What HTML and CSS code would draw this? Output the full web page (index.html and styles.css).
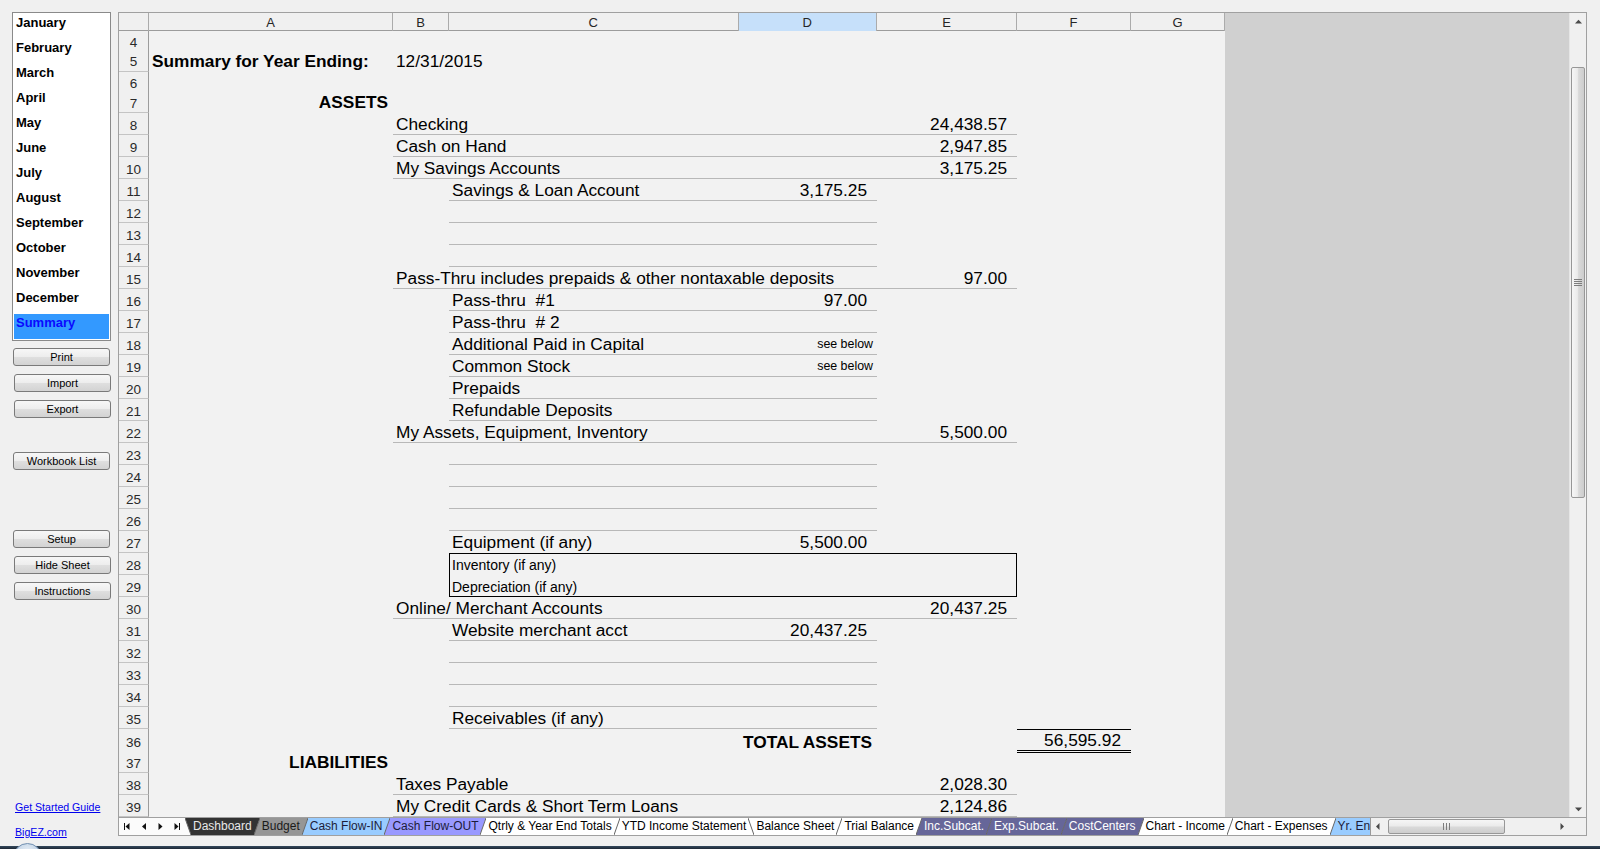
FILE: index.html
```html
<!DOCTYPE html>
<html>
<head>
<meta charset="utf-8">
<title>Balance Sheet</title>
<link rel="stylesheet" href="styles.css">
</head>
<body>
<div class="app">
  <aside class="side">
    <ul class="months">
      <li>January</li><li>February</li><li>March</li><li>April</li><li>May</li><li>June</li><li>July</li><li>August</li><li>September</li><li>October</li><li>November</li><li>December</li><li class="sel">Summary</li>
    </ul>
    <button class="btn g7">Print</button>
    <button class="btn g8 sh">Import</button>
    <button class="btn g8 sh">Export</button>
    <button class="btn g34">Workbook List</button>
    <button class="btn g60">Setup</button>
    <button class="btn g8 sh">Hide Sheet</button>
    <button class="btn g8 sh">Instructions</button>
    <a class="link l1" href="#">Get Started Guide</a>
    <a class="link l2" href="#">BigEZ.com</a>
  </aside>

  <section class="book">
    <div class="main">
      <div class="sheet">
        <div class="ch"><span></span><span>A</span><span>B</span><span>C</span><span class="hsel">D</span><span>E</span><span>F</span><span>G</span></div>
        <div class="r r4"><b class="rh">4</b></div>
        <div class="r r5"><b class="rh">5</b><span class="t cA bd">Summary for Year Ending:</span><span class="t cB">12/31/2015</span></div>
        <div class="r r6"><b class="rh">6</b></div>
        <div class="r"><b class="rh">7</b><span class="t cA bd ra">ASSETS</span></div>
        <div class="r"><b class="rh">8</b><i class="u uBE"></i><span class="t cB">Checking</span><span class="n cE">24,438.57</span></div>
        <div class="r"><b class="rh">9</b><i class="u uBE"></i><span class="t cB">Cash on Hand</span><span class="n cE">2,947.85</span></div>
        <div class="r"><b class="rh">10</b><i class="u uBE"></i><span class="t cB">My Savings Accounts</span><span class="n cE">3,175.25</span></div>
        <div class="r"><b class="rh">11</b><i class="u uCD"></i><span class="t cC">Savings &amp; Loan Account</span><span class="n cD">3,175.25</span></div>
        <div class="r"><b class="rh">12</b><i class="u uCD"></i></div>
        <div class="r"><b class="rh">13</b><i class="u uCD"></i></div>
        <div class="r"><b class="rh">14</b><i class="u uCD"></i></div>
        <div class="r"><b class="rh">15</b><i class="u uBE"></i><span class="t cB">Pass-Thru includes prepaids &amp; other nontaxable deposits</span><span class="n cE">97.00</span></div>
        <div class="r"><b class="rh">16</b><i class="u uCD"></i><span class="t cC">Pass-thru  #1</span><span class="n cD">97.00</span></div>
        <div class="r"><b class="rh">17</b><i class="u uCD"></i><span class="t cC">Pass-thru  # 2</span></div>
        <div class="r"><b class="rh">18</b><i class="u uCD"></i><span class="t cC">Additional Paid in Capital</span><span class="sb cD">see below</span></div>
        <div class="r"><b class="rh">19</b><i class="u uCD"></i><span class="t cC">Common Stock</span><span class="sb cD">see below</span></div>
        <div class="r"><b class="rh">20</b><i class="u uCD"></i><span class="t cC">Prepaids</span></div>
        <div class="r"><b class="rh">21</b><i class="u uCD"></i><span class="t cC">Refundable Deposits</span></div>
        <div class="r"><b class="rh">22</b><i class="u uBE"></i><span class="t cB">My Assets, Equipment, Inventory</span><span class="n cE">5,500.00</span></div>
        <div class="r"><b class="rh">23</b><i class="u uCD"></i></div>
        <div class="r"><b class="rh">24</b><i class="u uCD"></i></div>
        <div class="r"><b class="rh">25</b><i class="u uCD"></i></div>
        <div class="r"><b class="rh">26</b><i class="u uCD"></i></div>
        <div class="r"><b class="rh">27</b><span class="t cC">Equipment (if any)</span><span class="n cD">5,500.00</span></div>
        <div class="r"><b class="rh">28</b><i class="bx bx1"></i><span class="t sm cC">Inventory (if any)</span></div>
        <div class="r"><b class="rh">29</b><i class="bx bx2"></i><span class="t sm cC">Depreciation (if any)</span></div>
        <div class="r"><b class="rh">30</b><i class="u uBE"></i><span class="t cB">Online/ Merchant Accounts</span><span class="n cE">20,437.25</span></div>
        <div class="r"><b class="rh">31</b><i class="u uCD"></i><span class="t cC">Website merchant acct</span><span class="n cD">20,437.25</span></div>
        <div class="r"><b class="rh">32</b><i class="u uCD"></i></div>
        <div class="r"><b class="rh">33</b><i class="u uCD"></i></div>
        <div class="r"><b class="rh">34</b><i class="u uCD"></i></div>
        <div class="r"><b class="rh">35</b><i class="u uCD"></i><span class="t cC">Receivables (if any)</span></div>
        <div class="r"><b class="rh">36</b><span class="t cD bd ra">TOTAL ASSETS</span><span class="tot cF">56,595.92</span></div>
        <div class="r"><b class="rh">37</b><span class="t cA bd ra">LIABILITIES</span></div>
        <div class="r"><b class="rh">38</b><i class="u uBE"></i><span class="t cB">Taxes Payable</span><span class="n cE">2,028.30</span></div>
        <div class="r"><b class="rh">39</b><i class="u uBE"></i><span class="t cB">My Credit Cards &amp; Short Term Loans</span><span class="n cE">2,124.86</span></div>
      </div>
      <div class="fill"></div>
      <div class="vs">
        <svg class="sbtn" width="16" height="17" viewBox="0 0 16 17"><path d="M5 10.5H12L8.5 6.8Z" fill="#4a4a4a"/></svg>
        <div class="vthumb">
          <svg width="8" height="7" viewBox="0 0 8 7"><path d="M0 0.5H8M0 2.5H8M0 4.5H8M0 6.5H8" stroke="#7d7d7d" stroke-width="1"/></svg>
        </div>
        <svg class="sbtn down" width="16" height="17" viewBox="0 0 16 17"><path d="M5 7.5H12L8.5 11.2Z" fill="#4a4a4a"/></svg>
      </div>
    </div>

    <div class="tabbar">
      <svg class="nav" width="66" height="17" viewBox="0 0 66 17">
        <g fill="#111">
          <rect x="5" y="5" width="1" height="7"/><path d="M6.5 8.5L10.5 5V12Z"/>
          <path d="M23 8.5L27 5V12Z"/>
          <path d="M43.5 8.5L39.5 5V12Z"/>
          <path d="M59.5 8.5L55.5 5V12Z"/><rect x="60" y="5" width="1" height="7"/>
        </g>
      </svg>
      <div class="tabs">
        <svg class="sep" viewBox="0 0 6 17"><path class="fs" d="M0 0L6 17H0Z"/><path class="fk" d="M0 0H6V17Z"/><path class="ln" d="M0 0L6 17"/></svg>
        <span class="tab tk">Dashboard</span>
        <svg class="sep" viewBox="0 0 6 17"><path class="fk" d="M0 0H6L0 17Z"/><path class="fg" d="M6 0V17H0Z"/><path class="ln" d="M0 17L6 0"/></svg>
        <span class="tab tg">Budget</span>
        <svg class="sep" viewBox="0 0 6 17"><path class="fg" d="M0 0H6L0 17Z"/><path class="fb" d="M6 0V17H0Z"/><path class="ln" d="M0 17L6 0"/></svg>
        <span class="tab tb">Cash Flow-IN</span>
        <svg class="sep" viewBox="0 0 6 17"><path class="fb" d="M0 0H6L0 17Z"/><path class="fp" d="M6 0V17H0Z"/><path class="ln" d="M0 17L6 0"/></svg>
        <span class="tab tp">Cash Flow-OUT</span>
        <svg class="sep" viewBox="0 0 6 17"><path class="fp" d="M0 0H6L0 17Z"/><path class="fw" d="M6 0V17H0Z"/><path class="ln" d="M0 17L6 0"/></svg>
        <span class="tab tw">Qtrly &amp; Year End Totals</span>
        <svg class="sep" viewBox="0 0 6 17"><path class="fw" d="M0 0H6L0 17Z"/><path class="fw" d="M6 0V17H0Z"/><path class="ln" d="M0 17L6 0"/></svg>
        <span class="tab tw">YTD Income Statement</span>
        <svg class="sep" viewBox="0 0 6 17"><path class="fw" d="M0 0L6 17H0Z"/><path class="fw" d="M0 0H6V17Z"/><path class="ln" d="M0 0L6 17"/></svg>
        <span class="tab tw">Balance Sheet</span>
        <svg class="sep" viewBox="0 0 6 17"><path class="fw" d="M0 0H6L0 17Z"/><path class="fw" d="M6 0V17H0Z"/><path class="ln" d="M0 17L6 0"/></svg>
        <span class="tab tw">Trial Balance</span>
        <svg class="sep" viewBox="0 0 6 17"><path class="fw" d="M0 0H6L0 17Z"/><path class="fs2" d="M6 0V17H0Z"/><path class="ln" d="M0 17L6 0"/></svg>
        <span class="tab ts">Inc.Subcat.</span>
        <svg class="sep" viewBox="0 0 6 17"><path class="fs2" d="M0 0H6L0 17Z"/><path class="fs2" d="M6 0V17H0Z"/><path class="ln" d="M0 17L6 0"/></svg>
        <span class="tab ts">Exp.Subcat.</span>
        <svg class="sep" viewBox="0 0 6 17"><path class="fs2" d="M0 0H6L0 17Z"/><path class="fs2" d="M6 0V17H0Z"/><path class="ln" d="M0 17L6 0"/></svg>
        <span class="tab ts">CostCenters</span>
        <svg class="sep" viewBox="0 0 6 17"><path class="fs2" d="M0 0H6L0 17Z"/><path class="fw" d="M6 0V17H0Z"/><path class="ln" d="M0 17L6 0"/></svg>
        <span class="tab tw">Chart - Income</span>
        <svg class="sep" viewBox="0 0 6 17"><path class="fw" d="M0 0H6L0 17Z"/><path class="fw" d="M6 0V17H0Z"/><path class="ln" d="M0 17L6 0"/></svg>
        <span class="tab tw">Chart - Expenses</span>
        <svg class="sep" viewBox="0 0 6 17"><path class="fw" d="M0 0H6L0 17Z"/><path class="fb" d="M6 0V17H0Z"/><path class="ln" d="M0 17L6 0"/></svg>
        <span class="tab tb">Yr. End Summary</span>
      </div>
      <div class="hs">
        <svg class="harr" width="14" height="17" viewBox="0 0 14 17"><path d="M5 8.5L8.5 5V12Z" fill="#4a4a4a"/></svg>
        <div class="hthumb">
          <svg width="7" height="7" viewBox="0 0 7 7"><path d="M0.5 0V7M3.5 0V7M6.5 0V7" stroke="#7d7d7d" stroke-width="1"/></svg>
        </div>
        <svg class="harr right" width="14" height="17" viewBox="0 0 14 17"><path d="M9 8.5L5.5 5V12Z" fill="#4a4a4a"/></svg>
      </div>
      <div class="corner"></div>
    </div>
  </section>
</div>
<div class="taskbar"></div>
<div class="orb"></div>
</body>
</html>
```

FILE: styles.css
```css
* { box-sizing: border-box; margin: 0; padding: 0; }
html, body { width: 1600px; height: 849px; overflow: hidden; }
body {
  background: #f0f0f0;
  font-family: "Liberation Sans", Arial, sans-serif;
  color: #000;
  position: relative;
}

.app { display: flex; height: 846px; padding-top: 12px; }

/* ---------- left panel ---------- */
.side {
  width: 118px; flex: none;
  display: flex; flex-direction: column; align-items: flex-start;
  padding-left: 12px;
}
.months {
  list-style: none;
  width: 99px; height: 329px;
  border: 1px solid #8a8a8a;
  background: #fff;
  padding: 1px;
}
.months li {
  height: 25px; line-height: 18px;
  padding: 0 0 7px 2px;
  font-size: 13px; font-weight: bold;
  white-space: nowrap;
}
.months li.sel { background: #3399ff; color: #0a0aff; }

.btn {
  display: block;
  width: 97px; height: 18px;
  margin-left: 1px;
  border: 1px solid #7a7a7a; border-radius: 3px;
  background: linear-gradient(#f7f7f7, #ededed 50%, #dfdfdf 51%, #d3d3d3);
  font: 11px "Liberation Sans", Arial, sans-serif;
  color: #000; text-align: center; line-height: 16px;
  padding: 0;
}
.btn.sh { margin-left: 2px; }
.g7 { margin-top: 7px; }
.g8 { margin-top: 8px; }
.g34 { margin-top: 34px; }
.g60 { margin-top: 60px; }

.link {
  font-size: 10.6px; line-height: 13px;
  color: #0000ee; text-decoration: underline;
  margin-left: 3px; white-space: nowrap;
}
.l1 { margin-top: 201px; }
.l2 { margin-top: 12px; }

/* ---------- workbook frame ---------- */
.book {
  width: 1469px; height: 824px; flex: none;
  border: 1px solid #a0a0a0;
  display: flex; flex-direction: column;
  background: #f0f0f0;
}
.main { display: flex; height: 804px; flex: none; }
.sheet { width: 1106px; flex: none; background: #f2f2f2; }
.fill { width: 344px; flex: none; background: #d0d0d0; }

/* column header */
.ch, .r {
  display: grid;
  grid-template-columns: 30px 244px 56px 289.5px 138.5px 140px 114px 94px;
}
.ch { height: 18px; border-bottom: 1px solid #9c9c9c; background: #f0f0f0; }
.ch span {
  border-right: 1px solid #ababab;
  text-align: center; font-size: 13px; line-height: 17px; color: #262626;
  padding-top: 1px;
}
.ch .hsel { background: #c6e0fa; }

/* rows */
.r { height: 22px; }
.r4 { height: 16px; }
.r5 { height: 25px; }
.r6 { height: 19px; }
.r > * { grid-row: 1; }

.rh {
  grid-column: 1;
  font-weight: normal; font-size: 13.5px; color: #2a2a2a;
  background: #f0f0f0;
  border-right: 1px solid #9c9c9c;
  border-bottom: 1px solid #c4c4c4;
  display: flex; align-items: center; justify-content: center;
  padding-top: 4px;
}

.cA { grid-column: 2; }
.cB { grid-column: 3; }
.cC { grid-column: 4; }
.cD { grid-column: 5; }
.cE { grid-column: 6; }
.cF { grid-column: 7; }

.t, .n, .sb {
  align-self: end;
  line-height: 20px; font-size: 17.3px;
  white-space: pre;
  padding-bottom: 1px;
}
.t { padding-left: 3px; }
.n { text-align: right; padding-right: 10px; }
.bd { font-weight: bold; }
.ra { text-align: right; padding-left: 0; padding-right: 5px; }
.sm { font-size: 14px; padding-bottom: 0; }
.sb { font-size: 12.4px; text-align: right; padding-right: 4px; padding-bottom: 1px; }

.u { align-self: end; height: 1px; background: #b8b8b8; }
.uBE { grid-column: 3 / 7; }
.uCD { grid-column: 4 / 6; }

.bx { grid-column: 4 / 7; align-self: stretch; border: 1px solid #000; }
.bx1 { border-bottom: 0; }
.bx2 { border-top: 0; }

.tot {
  align-self: stretch;
  border-top: 1px solid #000;
  border-bottom: 3px double #000;
  font-size: 17.3px; line-height: 20px;
  display: flex; align-items: flex-end; justify-content: flex-end;
  padding-right: 10px;
}

/* vertical scrollbar */
.vs {
  width: 17px; flex: none;
  border-left: 1px solid #e6e6e6;
  background: #f0f0f0;
  display: flex; flex-direction: column;
}
.sbtn { display: block; flex: none; }
.sbtn.down { margin-top: auto; }
.vthumb {
  margin: 37px 0 0 1px;
  width: 14px; height: 431px; flex: none;
  border: 1px solid #979797; border-radius: 2px;
  background: linear-gradient(to right, #f6f6f6, #ebebeb 45%, #d9d9d9 55%, #cdcdcd);
  display: flex; align-items: center; justify-content: center;
}

/* sheet tabs */
.tabbar {
  height: 18px; flex: none;
  border-top: 1px solid #a0a0a0;
  display: flex;
}
.nav { display: block; flex: none; background: #fbfbfb; }
.tabs {
  width: 1185px; flex: none;
  display: flex; overflow: hidden;
  background: #fff;
}
.sep { display: block; flex: none; width: 6px; height: 17px; }
.sep .ln { stroke: #666; stroke-width: 1; fill: none; }
.fs { fill: #fbfbfb; }
.fk { fill: #333333; }
.fg { fill: #969696; }
.fb { fill: #99ccff; }
.fp { fill: #9999ff; }
.fw { fill: #ffffff; }
.fs2 { fill: #666699; }

.tab {
  flex: none;
  padding: 0 2px;
  font-size: 12px; line-height: 17px;
  white-space: nowrap;
}
.tk { background: #333333; color: #e8e8e8; }
.tg { background: #969696; color: #1a1a1a; }
.tb { background: #99ccff; color: #1c1c3a; }
.tp { background: #9999ff; color: #1c1c3a; }
.tw { background: #ffffff; color: #000; }
.ts { background: #666699; color: #fff; }

.hs {
  width: 199px; flex: none;
  border-left: 1px solid #9a9a9a;
  background: #f0f0f0;
  display: flex; align-items: center;
}
.harr { display: block; flex: none; }
.harr.right { margin-left: auto; }
.hthumb {
  margin-left: 3px;
  width: 117px; height: 15px; flex: none;
  border: 1px solid #979797; border-radius: 2px;
  background: linear-gradient(#f6f6f6, #ebebeb 45%, #d9d9d9 55%, #cdcdcd);
  display: flex; align-items: center; justify-content: center;
}
.corner { width: 17px; flex: none; background: #f0f0f0; }

/* taskbar strip */
.taskbar { height: 3px; background: linear-gradient(#34495e, #1c2733); }
.orb {
  position: absolute; left: 13px; top: 843px;
  width: 29px; height: 29px; border-radius: 50%;
  border: 1px solid #6f8eb0;
  background: radial-gradient(circle at 50% 30%, #e9f0f7, #9db7d3);
}
```
